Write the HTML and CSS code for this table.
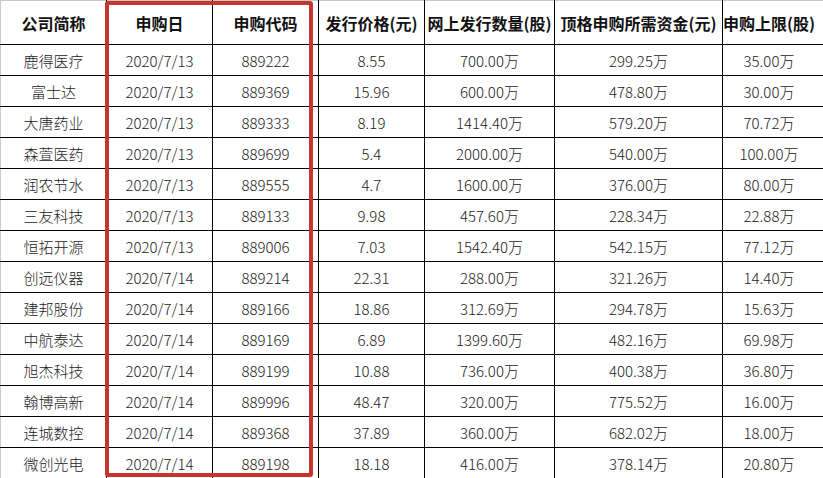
FILE: index.html
```html
<!DOCTYPE html>
<html lang="zh-CN">
<head>
<meta charset="utf-8">
<title>申购</title>
<link rel="stylesheet" href="styles.css">
</head>
<body>
<div class="sheet">
<table class="grid">
<colgroup>
<col class="c1"><col class="c2"><col class="c3"><col class="c4"><col class="c5"><col class="c6"><col class="c7">
</colgroup>
<thead>
<tr class="head"><th>公司简称</th><th>申购日</th><th>申购代码</th><th>发行价格(元)</th><th>网上发行数量(股)</th><th>顶格申购所需资金(元)</th><th class="last">申购上限(股)</th></tr>
</thead>
<tbody>
<tr><td>鹿得医疗</td><td>2020/7/13</td><td>889222</td><td>8.55</td><td>700.00万</td><td>299.25万</td><td class="last">35.00万</td></tr>
<tr><td>富士达</td><td>2020/7/13</td><td>889369</td><td>15.96</td><td>600.00万</td><td>478.80万</td><td class="last">30.00万</td></tr>
<tr><td>大唐药业</td><td>2020/7/13</td><td>889333</td><td>8.19</td><td>1414.40万</td><td>579.20万</td><td class="last">70.72万</td></tr>
<tr><td>森萱医药</td><td>2020/7/13</td><td>889699</td><td>5.4</td><td>2000.00万</td><td>540.00万</td><td class="last">100.00万</td></tr>
<tr><td>润农节水</td><td>2020/7/13</td><td>889555</td><td>4.7</td><td>1600.00万</td><td>376.00万</td><td class="last">80.00万</td></tr>
<tr><td>三友科技</td><td>2020/7/13</td><td>889133</td><td>9.98</td><td>457.60万</td><td>228.34万</td><td class="last">22.88万</td></tr>
<tr><td>恒拓开源</td><td>2020/7/13</td><td>889006</td><td>7.03</td><td>1542.40万</td><td>542.15万</td><td class="last">77.12万</td></tr>
<tr><td>创远仪器</td><td>2020/7/14</td><td>889214</td><td>22.31</td><td>288.00万</td><td>321.26万</td><td class="last">14.40万</td></tr>
<tr><td>建邦股份</td><td>2020/7/14</td><td>889166</td><td>18.86</td><td>312.69万</td><td>294.78万</td><td class="last">15.63万</td></tr>
<tr><td>中航泰达</td><td>2020/7/14</td><td>889169</td><td>6.89</td><td>1399.60万</td><td>482.16万</td><td class="last">69.98万</td></tr>
<tr><td>旭杰科技</td><td>2020/7/14</td><td>889199</td><td>10.88</td><td>736.00万</td><td>400.38万</td><td class="last">36.80万</td></tr>
<tr><td>翰博高新</td><td>2020/7/14</td><td>889996</td><td>48.47</td><td>320.00万</td><td>775.52万</td><td class="last">16.00万</td></tr>
<tr><td>连城数控</td><td>2020/7/14</td><td>889368</td><td>37.89</td><td>360.00万</td><td>682.02万</td><td class="last">18.00万</td></tr>
<tr><td>微创光电</td><td>2020/7/14</td><td>889198</td><td>18.18</td><td>416.00万</td><td>378.14万</td><td class="last">20.80万</td></tr>
</tbody>
</table>
<div class="highlight"></div>
</div>
</body>
</html>
```
FILE: styles.css
```css
html, body {
  margin: 0;
  padding: 0;
  background: #fff;
}
.sheet {
  position: relative;
  width: 823px;
  height: 478px;
  overflow: hidden;
}
.grid {
  border-collapse: collapse;
  table-layout: fixed;
  width: 823px;
  font-family: "Noto Sans CJK SC", "Noto Sans", sans-serif;
}
.c1, .c2, .c3, .c4 { width: 106px; }
.c5 { width: 130px; }
.c6 { width: 168px; }
.c7 { width: 101px; }
.grid th, .grid td {
  border: 1px solid #000;
  text-align: center;
  padding: 0;
  white-space: nowrap;
  overflow: hidden;
}
.grid th:first-child, .grid td:first-child {
  border-left: 1px solid #c8c8c8;
}
.grid th {
  border-top: 1px solid #c8c8c8;
  font-size: 16px;
  font-weight: 700;
  color: #111;
}
.grid th.last, .grid td.last {
  padding-right: 8px;
}
.head { height: 44px; }
.grid tbody tr { height: 31px; }
.grid td {
  font-size: 15px;
  font-weight: 300;
  color: #222;
}
.highlight {
  position: absolute;
  left: 105px;
  top: 1px;
  width: 200px;
  height: 468px;
  border: 4px solid #c6352e;
  border-radius: 3px;
}
```
